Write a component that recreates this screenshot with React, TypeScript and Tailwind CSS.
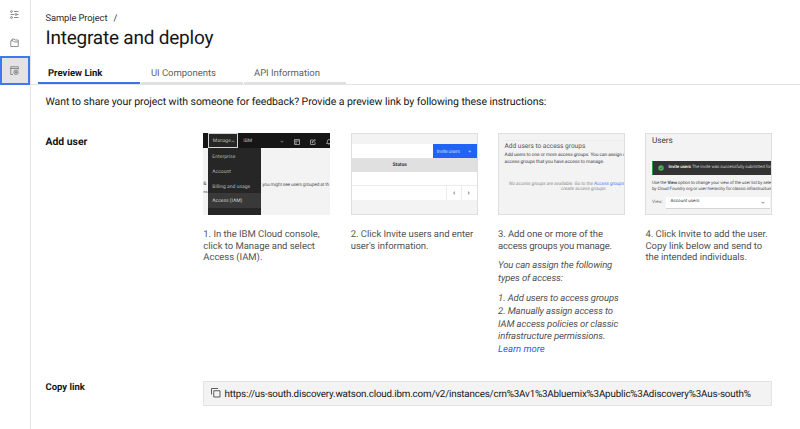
import type { ReactNode } from 'react';

function Row({ className = '', children }: { className?: string; children?: ReactNode }) {
  return <div className={`whitespace-nowrap ${className}`}>{children}</div>;
}

function Rail() {
  return (
    <nav className="flex w-[30.5px] shrink-0 flex-col border-r border-[#e3e3e3] text-[#6f6f6f]">
      <div className="flex h-7 items-center justify-center">
        <svg className="h-[9px] w-[9px]" viewBox="0 0 18 18" fill="none" stroke="currentColor" strokeWidth="1.6">
          <circle cx="3" cy="3" r="1.8" />
          <path d="M8 3h9" />
          <circle cx="12" cy="9" r="1.8" />
          <path d="M1 9h7M14 9h3" />
          <circle cx="3" cy="15" r="1.8" />
          <path d="M8 15h9" />
        </svg>
      </div>
      <div className="flex h-7 items-center justify-center">
        <svg className="h-[9px] w-[9px]" viewBox="0 0 18 18" fill="none" stroke="currentColor" strokeWidth="1.5">
          <path d="M1.500 17V5.500H6l2.500 2.500h8V17z" />
          <path d="M4 5.500V2h4l2 2h6.500v4" />
        </svg>
      </div>
      <div className="flex h-[28.500px] items-center justify-center border-2 border-[#3f78f3] bg-[#e3e3e3]">
        <svg className="h-[9px] w-[9px]" viewBox="0 0 18 18" fill="none" stroke="currentColor" strokeWidth="1.5">
          <path d="M6 17H1.500V1.500h15V7M1.500 5h15" />
          <circle cx="12" cy="12.500" r="4.500" />
          <circle cx="12" cy="12.500" r="1.500" fill="currentColor" />
        </svg>
      </div>
    </nav>
  );
}

function Thumb({ children }: { children: ReactNode }) {
  return (
    <div className="h-[82px] w-[127px] overflow-hidden border border-[#dedede] bg-[#f3f3f3]">{children}</div>
  );
}

function ConsoleThumb() {
  return (
    <div className="h-[82px] w-[127px] overflow-hidden bg-[#f3f3f3] text-[5px] leading-[7px]">
      <div className="flex h-[15px] items-center bg-[#161616] pl-[4.500px] text-[#b5b5b5]">
        <div className="flex h-[15.500px] w-[30.500px] shrink-0 items-center border border-[#d5d5d5] bg-[#262626] pt-[2px] pl-1">
          <span className="w-[18px]">Manage</span>
          <svg className="h-[3px] w-1" viewBox="0 0 8 5" fill="none" stroke="currentColor" strokeWidth="1.300"><path d="M1 4l3-3 3 3" /></svg>
        </div>
        <span className="ml-[5px] w-[37px] shrink-0 pt-[2px]">IBM</span>
        <svg className="mt-[1px] h-[3px] w-1 shrink-0" viewBox="0 0 8 5" fill="none" stroke="currentColor" strokeWidth="1.300"><path d="M1 1l3 3 3-3" /></svg>
        <svg className="mt-[2px] ml-[10px] h-[6px] w-[6px] shrink-0" viewBox="0 0 12 12" fill="none" stroke="currentColor" strokeWidth="1.500"><path d="M1 1h10v10H1zM1 4h10M4 4v7" /></svg>
        <svg className="mt-[2px] ml-[9.500px] h-[6px] w-[6px] shrink-0" viewBox="0 0 12 12" fill="none" stroke="currentColor" strokeWidth="1.500"><path d="M7 2H1v9h9V6M4 8l1-3 5-4 1 1-5 5z" /></svg>
        <svg className="mt-[2px] ml-[10px] h-[6px] w-[6px] shrink-0" viewBox="0 0 12 12" fill="none" stroke="currentColor" strokeWidth="1.500"><path d="M1 9l2-3V4a3 3 0 0 1 6 0v2l2 3zM5 11h2" /></svg>
      </div>
      <div className="flex h-[67px]">
        <div className="w-[4.500px] shrink-0 pt-[33px] text-[#525252]">
          <Row>&amp;</Row>
          <Row className="text-[4px]">ns</Row>
        </div>
        <div className="w-[53px] shrink-0 bg-[#262626] pt-[1px] text-[#b5b5b5]">
          <Row className="pt-[2px] pl-[4.500px] leading-[12.800px] tracking-[0.060px]">Enterprise</Row>
          <Row className="pt-[2px] pl-[4.500px] leading-[12.800px]">Account</Row>
          <Row className="pt-[2px] pl-[4.500px] leading-[12.800px]">Billing and usage</Row>
          <Row className="bg-[#393939] pt-[2px] pl-[4.500px] leading-[12.800px] text-[#d0d0d0]">Access (IAM)</Row>
        </div>
        <Row className="pt-[33.500px] pl-[1.500px] text-[4.700px] tracking-[-0.120px] text-[#525252]">you might see users grouped at th</Row>
      </div>
    </div>
  );
}

function InviteThumb() {
  return (
    <Thumb>
      <div className="mt-[10px] flex h-[14px] justify-end bg-white text-[5px] leading-[16px]">
        <div className="flex w-[44px] justify-between bg-[#2163f3] pr-[5.500px] pl-[4px] text-[#c5d7ff]">
          <span className="tracking-[-0.200px]">Invite users</span>
          <span>+</span>
        </div>
      </div>
      <div className="h-[14px] bg-[#e0e0e0] pr-7 text-center text-[5px] leading-[15px] font-bold text-[#3a3a3a]">
        <span className="ml-[-1px]">Status</span>
      </div>
      <div className="h-[14px] border-b border-[#ececec] bg-white" />
      <div className="flex h-[14px] justify-end bg-white text-[#a8a8a8]">
        <div className="flex w-[15.500px] items-center justify-center border-l border-[#ececec]">
          <svg className="h-[4px] w-[4px]" viewBox="0 0 4 4" fill="currentColor"><path d="M3 0v4L1 2z" /></svg>
        </div>
        <div className="flex w-[15.500px] items-center justify-center border-l border-[#ececec]">
          <svg className="h-[4px] w-[4px]" viewBox="0 0 4 4" fill="currentColor"><path d="M1 0v4l2-2z" /></svg>
        </div>
      </div>
    </Thumb>
  );
}

function GroupsThumb() {
  return (
    <Thumb>
      <div className="mt-[6px] ml-[5.500px] h-[1px] bg-[#ebebeb]" />
      <Row className="pl-[5.500px] text-[6.600px] leading-[11px] tracking-[-0.030px] text-[#555]">Add users to access groups</Row>
      <div className="pl-[5.500px] text-[4.800px] leading-[6.600px] text-[#3d3d3d]">
        <Row className="pt-[1px] tracking-[-0.070px]">Add users to one or more access groups. You can assign u</Row>
        <Row className="tracking-[-0.060px]">access groups that you have access to manage.</Row>
      </div>
      <div className="pt-[15.500px] pl-[10px] text-[4.800px] leading-[5.400px] text-[#8d8d8d] italic">
        <Row className="tracking-[-0.050px]">No access groups are available. Go to the <span className="text-[#4a80f5]">Access groups</span></Row>
        <Row className="pl-[52px]">create access groups.</Row>
      </div>
    </Thumb>
  );
}

function UsersThumb() {
  return (
    <Thumb>
      <Row className="pt-[2px] pl-[5.500px] text-[8.200px] leading-[11px] text-[#393939]">Users</Row>
      <div className="mt-[13.500px] ml-[5.500px] flex h-[14.500px] items-center border-l border-[#24a148] bg-[#333] pl-[5px] text-[4.500px] tracking-[-0.090px] text-[#c6c6c6]">
        <svg className="h-[6px] w-[6px] shrink-0" viewBox="0 0 12 12"><circle cx="6" cy="6" r="5.500" fill="#3fb95b" /><path d="M3.500 6l2 2 3-3.500" fill="none" stroke="#333" strokeWidth="1.300" /></svg>
        <Row className="pt-[2px] pl-[4.500px]"><b className="text-[#e5e5e5]">Invite users</b> The invite was successfully submitted for</Row>
      </div>
      <div className="pt-[6px] pl-[5.500px] text-[4.500px] leading-[6px] tracking-[-0.100px] text-[#4a4a4a]">
        <Row>Use the <b>View</b> option to change your view of the user list by selec</Row>
        <Row>by Cloud Foundry org or user hierarchy for classic infrastructure</Row>
      </div>
      <div className="mt-[4px] flex h-[11.500px] items-center pl-[5.500px] text-[4.500px] text-[#6f6f6f]">
        <span className="w-[14px] pt-[1px]">View:</span>
        <div className="flex h-full w-[104px] items-center justify-between border-b border-[#d5d5d5] bg-white pr-[5px] pl-[4.500px] text-[4.500px] text-[#393939]">
          <span className="pt-[1px]">Account users</span>
          <svg className="h-[3px] w-1" viewBox="0 0 8 5" fill="none" stroke="currentColor" strokeWidth="1.200"><path d="M1 1l3 3 3-3" /></svg>
        </div>
      </div>
    </Thumb>
  );
}

function Step({ thumb, children }: { thumb: ReactNode; children: ReactNode }) {
  return (
    <div className="w-[147.400px] shrink-0">
      {thumb}
      <div className="pt-[14px] text-[9.500px] leading-[11.650px] tracking-[-0.040px] text-[#525252]">{children}</div>
    </div>
  );
}

export default function App() {
  return (
    <div className="flex h-[429px] w-[800px] overflow-hidden bg-white font-['Roboto','Noto_Sans',sans-serif] text-[#161616] [text-rendering:geometricPrecision]">
      <Rail />
      <main className="min-w-0 flex-1">
        <header className="h-[84.500px] border-b border-[#e3e3e3]">
          <div className="pt-[12px] pl-[15px]">
            <Row className="flex h-[12px] gap-[6px] text-[9.400px] leading-[13px] tracking-[-0.100px] text-[#2b2b2b]">
              <span>Sample Project</span>
              <span>/</span>
            </Row>
            <Row className="h-[27px] text-[19px] leading-[27px] tracking-[-0.220px]">Integrate and deploy</Row>
          </div>
          <div className="flex gap-[1px] pt-[10px] pl-[7.500px] text-[9.500px] leading-[26px] tracking-[-0.040px] text-[#5f5f5f]">
            <Row className="h-[23px] w-[102px] border-b-2 border-[#3d72e4] pl-[10px] font-bold tracking-normal text-[#161616]">Preview Link</Row>
            <Row className="h-[23px] w-[102px] border-b-2 border-[#e0e0e0] pl-[10px]">UI Components</Row>
            <Row className="h-[23px] w-[102px] border-b-2 border-[#e0e0e0] pl-[10px]">API Information</Row>
          </div>
        </header>
        <div className="pl-[15px]">
          <Row className="pt-[10px] text-[10.500px] leading-[14px] tracking-[-0.068px]">
            Want to share your project with someone for feedback? Provide a preview link by following these instructions:
          </Row>
          <section className="flex h-[247.500px] pt-[24.500px]">
            <h2 className="w-[157.800px] shrink-0 text-[10.400px] leading-[18px] font-bold">Add user</h2>
            <Step thumb={<ConsoleThumb />}>
              <Row>1. In the IBM Cloud console,</Row>
              <Row>click to Manage and select</Row>
              <Row>Access (IAM).</Row>
            </Step>
            <Step thumb={<InviteThumb />}>
              <Row>2. Click Invite users and enter</Row>
              <Row>user's information.</Row>
            </Step>
            <Step thumb={<GroupsThumb />}>
              <Row className="tracking-[-0.100px]">3. Add one or more of the</Row>
              <Row className="tracking-[-0.180px]">access groups you manage.</Row>
              <div className="pt-[7.500px] leading-[12.800px] tracking-[-0.120px] italic">
                <Row>You can assign the following</Row>
                <Row>types of access:</Row>
                <Row className="pt-[7.500px]">1. Add users to access groups</Row>
                <Row>2. Manually assign access to</Row>
                <Row>IAM access policies or classic</Row>
                <Row>infrastructure permissions.</Row>
                <Row className="tracking-normal text-[#2163f3]">Learn more</Row>
              </div>
            </Step>
            <Step thumb={<UsersThumb />}>
              <Row>4. Click Invite to add the user.</Row>
              <Row>Copy link below and send to</Row>
              <Row>the intended individuals.</Row>
            </Step>
          </section>
          <section className="flex pt-[24.500px]">
            <h2 className="w-[157.500px] shrink-0 text-[9.500px] leading-[13.500px] font-bold">Copy link</h2>
            <div className="flex h-[25px] w-[569px] items-center border border-[#e3e3e3] bg-[#f3f3f3] pl-[7px]">
              <svg className="h-[9.500px] w-[9.500px] shrink-0 text-[#393939]" viewBox="0 0 19 19" fill="none" stroke="currentColor" strokeWidth="1.600">
                <path d="M5.500 5.500h12.500v12.500H5.500zM1 13V1h13" />
              </svg>
              <Row className="pt-[3px] pl-[4px] text-[9.800px] leading-[14px] tracking-[-0.178px]">
                https://us-south.discovery.watson.cloud.ibm.com/v2/instances/crn%3Av1%3Abluemix%3Apublic%3Adiscovery%3Aus-south%
              </Row>
            </div>
          </section>
        </div>
      </main>
    </div>
  );
}
